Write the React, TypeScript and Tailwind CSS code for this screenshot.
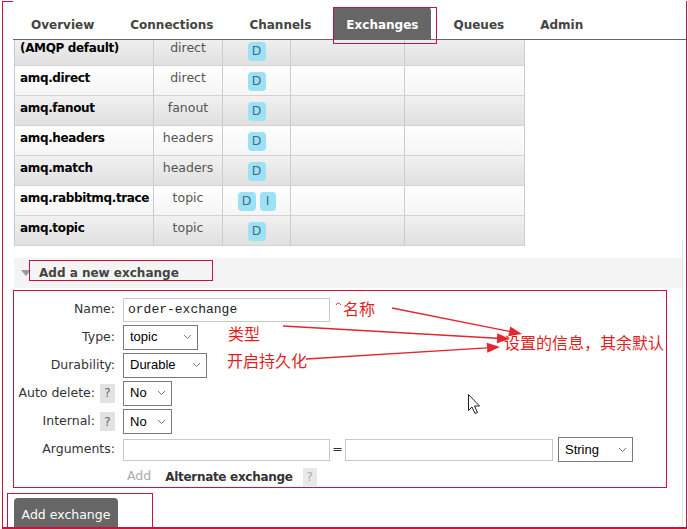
import React from 'react';

const RED = 'border-[#c8143c]';

const tabs = ['Overview', 'Connections', 'Channels', 'Exchanges', 'Queues', 'Admin'];

const rows = [
    { name: '(AMQP default)', type: 'direct', features: ['D'] },
    { name: 'amq.direct', type: 'direct', features: ['D'] },
    { name: 'amq.fanout', type: 'fanout', features: ['D'] },
    { name: 'amq.headers', type: 'headers', features: ['D'] },
    { name: 'amq.match', type: 'headers', features: ['D'] },
    { name: 'amq.rabbitmq.trace', type: 'topic', features: ['D', 'I'] },
    { name: 'amq.topic', type: 'topic', features: ['D'] },
];

function Chevron() {
    return (
        <svg width="9" height="6" viewBox="0 0 9 6" className="ml-auto mr-[5px]">
            <polyline points="1,1 4.5,4.5 8,1" fill="none" stroke="#777" strokeWidth="1" />
        </svg>
    );
}

function Select({ value, width }: { value: string; width: string }) {
    return (
        <div className={`flex items-center h-[25px] border border-[#7a7a7a] bg-white pl-[6px] font-['Liberation_Sans',sans-serif] text-[13px] text-black ${width}`}>
            {value}
            <Chevron />
        </div>
    );
}

function Help() {
    return (
        <span className="inline-flex items-center justify-center w-[15px] h-[19px] bg-[#e2e2e2] text-[#666] text-[12px] ml-[5px]">?</span>
    );
}

function Label({ children }: { children: React.ReactNode }) {
    return <div className="w-[101px] flex justify-end items-center text-[12.5px] text-[#333] mr-[8px]">{children}</div>;
}

function Arrow({ x1, y1, x2, y2 }: { x1: number; y1: number; x2: number; y2: number }) {
    const a = Math.atan2(y2 - y1, x2 - x1);
    const len = 13;
    const w = 5;
    const bx = x2 - len * Math.cos(a);
    const by = y2 - len * Math.sin(a);
    const p1 = `${bx + w * Math.sin(a)},${by - w * Math.cos(a)}`;
    const p2 = `${bx - w * Math.sin(a)},${by + w * Math.cos(a)}`;
    return (
        <g>
            <line x1={x1} y1={y1} x2={bx} y2={by} stroke="#e4262e" strokeWidth="1.3" />
            <polygon points={`${x2},${y2} ${p1} ${p2}`} fill="#e4262e" />
        </g>
    );
}

export default function App() {
    return (
        <div className="relative w-[688px] h-[529px] overflow-hidden bg-white font-['DejaVu_Sans',sans-serif]">
            {/* tabs */}
            <div className="relative z-10 bg-white flex items-end h-[40px] ml-[13px] mr-[2px] border-b border-[#666]">
                {tabs.map((t) =>
                    t === 'Exchanges' ? (
                        <div key={t} className="h-[32px] mx-[4px] px-[13px] pt-[3px] flex items-center rounded-t-[4px] bg-[#666] text-white text-[12px] font-bold">
                            {t}
                        </div>
                    ) : (
                        <div key={t} className="h-[32px] px-[18px] pt-[3px] flex items-center text-[#444] text-[12px] font-bold">
                            {t}
                        </div>
                    )
                )}
            </div>

            {/* exchanges table */}
            <div className="mt-[-4px] ml-[14px] w-[511px] border-l border-r border-[#ccc]">
                {rows.map((r, i) => (
                    <div
                        key={r.name}
                        className={`grid grid-cols-[139px_69px_68px_114px_121px] h-[30px] border-b border-[#d2d2d2] ${
                            i % 2 === 0 ? 'bg-gradient-to-b from-[#f1f1f1] to-[#e0e0e0]' : 'bg-gradient-to-b from-white to-[#f5f5f5]'
                        }`}
                    >
                        <div className="pl-[5px] pt-[4px] text-[12px] leading-[16px] font-bold tracking-[-0.35px] text-black border-r border-[#ccc]">{r.name}</div>
                        <div className="pt-[4px] text-center text-[12.5px] leading-[16px] text-[#555] border-r border-[#ccc]">{r.type}</div>
                        <div className="flex justify-center gap-[4px] pt-[6px] border-r border-[#ccc]">
                            {r.features.map((f) => (
                                <span
                                    key={f}
                                    className={`h-[19px] ${f === 'D' ? 'w-[18px]' : 'w-[16px]'} flex items-center justify-center rounded-[4px] bg-[#9be2f6] text-[#4e6a7e] text-[12.5px]`}
                                >
                                    {f}
                                </span>
                            ))}
                        </div>
                        <div className="border-r border-[#ccc]" />
                        <div />
                    </div>
                ))}
            </div>

            {/* section header */}
            <div className="mt-[12px] ml-[14px] w-[668px] h-[30px] bg-[#f4f4f4] flex items-center">
                <svg width="10" height="7" viewBox="0 0 10 7" className="ml-[7px] mr-[8px]">
                    <polygon points="0,0 10,0 5,6" fill="#9a9a9a" />
                </svg>
                <span className="text-[12px] font-bold text-[#444]">Add a new exchange</span>
            </div>

            {/* form */}
            <div className={`mt-[2px] ml-[13px] w-[654px] h-[198px] border ${RED} pt-[5px]`}>
                <div className="flex items-center h-[27px]">
                    <Label>Name:</Label>
                    <div className="w-[207px] h-[24px] border border-[#c8c8c8] flex items-center pl-[4px] font-['Liberation_Mono',monospace] text-[13px] text-[#222]">
                        order-exchange
                    </div>
                </div>
                <div className="flex items-center h-[28px]">
                    <Label>Type:</Label>
                    <Select value="topic" width="w-[75px]" />
                </div>
                <div className="flex items-center h-[28px]">
                    <Label>Durability:</Label>
                    <Select value="Durable" width="w-[84px]" />
                </div>
                <div className="flex items-center h-[28px]">
                    <Label>
                        Auto delete:
                        <Help />
                    </Label>
                    <Select value="No" width="w-[49px]" />
                </div>
                <div className="flex items-center h-[29px]">
                    <Label>
                        Internal:
                        <Help />
                    </Label>
                    <Select value="No" width="w-[49px]" />
                </div>
                <div className="flex items-center h-[27px]">
                    <Label>Arguments:</Label>
                    <div className="w-[207px] h-[22px] border border-[#c8c8c8]" />
                    <span className="w-[15px] text-center text-[12.5px] text-[#333]">=</span>
                    <div className="w-[208px] h-[22px] border border-[#c8c8c8]" />
                    <div className="ml-[5px]">
                        <Select value="String" width="w-[75px]" />
                    </div>
                </div>
                <div className="flex items-center h-[26px] pl-[113px]">
                    <span className="text-[12.5px] text-[#aaa]">Add</span>
                    <span className="ml-[14px] mt-[2px] text-[12px] font-bold tracking-[-0.3px] text-[#333]">Alternate exchange</span>
                    <span className="ml-[10px] mt-[2px] inline-flex items-center justify-center w-[14px] h-[18px] bg-[#e8e8e8] text-[#aaa] text-[12px]">?</span>
                </div>
            </div>

            {/* submit */}
            <div className="mt-[10px] ml-[14px] w-[104px] h-[34px] rounded-t-[4px] bg-[#666] text-white text-[12.5px] flex items-start pt-[8px] justify-center">
                Add exchange
            </div>

            {/* annotations */}
            <div className="absolute left-[682px] top-[240px] w-px h-[289px] bg-[#e4e4e4]" />
            <div className={`absolute left-[2px] top-[1px] w-[685px] h-[528px] border border-b-2 ${RED}`} />
            <div className={`absolute left-[333px] top-[7px] w-[104px] h-[37px] border z-20 ${RED}`} />
            <div className={`absolute left-[29px] top-[260px] w-[184px] h-[21px] border ${RED}`} />
            <div className={`absolute left-[7px] top-[493px] w-[146px] h-[40px] border ${RED}`} />

            <span className="absolute left-[343px] top-[298px] text-[16px] leading-[20px] text-[#e01e1e] font-['Noto_Sans_CJK_SC',sans-serif]">名称</span>
            <span className="absolute left-[228px] top-[323px] text-[16px] leading-[20px] text-[#e01e1e] font-['Noto_Sans_CJK_SC',sans-serif]">类型</span>
            <span className="absolute left-[227px] top-[350px] text-[16px] leading-[20px] text-[#e01e1e] font-['Noto_Sans_CJK_SC',sans-serif]">开启持久化</span>
            <span className="absolute left-[504px] top-[332px] text-[16px] leading-[20px] text-[#e01e1e] font-['Noto_Sans_CJK_SC',sans-serif]">设置的信息，其余默认</span>

            <svg className="absolute left-0 top-0 pointer-events-none" width="688" height="529">
                <path d="M336 305 Q338 301 341 305" fill="none" stroke="#e4262e" strokeWidth="1" />
                <Arrow x1={392} y1={308} x2={522} y2={334} />
                <Arrow x1={283} y1={326} x2={510} y2={339} />
                <Arrow x1={306} y1={359} x2={500} y2={347} />
                <path
                    d="M468.5 394.5 L468.5 410.5 L472 407 L475 413.5 L477.5 412.5 L474.5 406 L479.5 406 Z"
                    fill="white"
                    stroke="#222"
                    strokeWidth="1"
                    strokeLinejoin="round"
                />
            </svg>
        </div>
    );
}
